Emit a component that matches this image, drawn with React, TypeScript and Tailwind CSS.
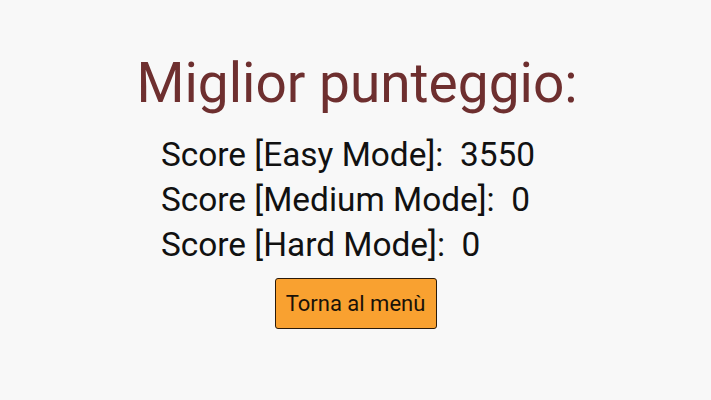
export default function App() {
  const rows = [
    { label: "Score [Easy Mode]:", value: "3550" },
    { label: "Score [Medium Mode]:", value: "0" },
    { label: "Score [Hard Mode]:", value: "0" },
  ];
  return (
    <div
      className="w-[711px] h-[400px] bg-[#f8f8f8] flex flex-col items-center pt-[51px]"
      style={{ fontFamily: "Roboto, sans-serif" }}
    >
      <h1 className="text-[55px] leading-[64px] text-[#6e2f2f] pl-[3px]">Miglior punteggio:</h1>
      <div className="mt-[17px] flex flex-col w-full pl-[161px]">
        {rows.map((r) => (
          <div key={r.label} className="text-[33.4px] leading-[45px] text-[#111] whitespace-pre">
            {r.label}  {r.value}
          </div>
        ))}
      </div>
      <button className="mt-[11px] w-[162px] h-[51px] rounded-[3px] border border-[#2a1a0a] bg-[#f9a130] text-[22px] text-[#1a1208]">
        Torna al menù
      </button>
    </div>
  );
}
